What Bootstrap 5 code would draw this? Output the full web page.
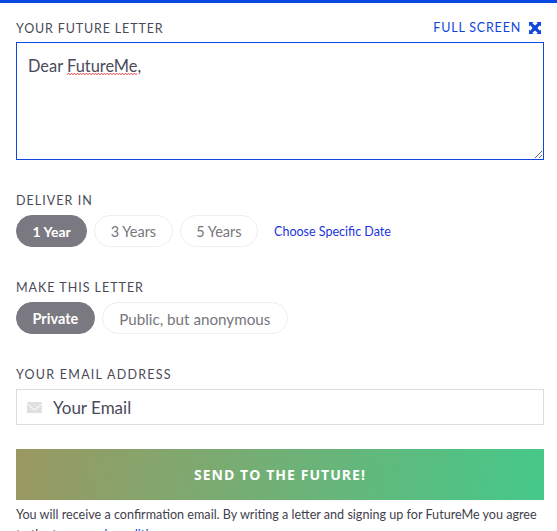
<!DOCTYPE html>
<html lang="en">
<head>
<meta charset="utf-8">
<title>FutureMe</title>
<link href="https://cdn.jsdelivr.net/npm/bootstrap@5.3.0/dist/css/bootstrap.min.css" rel="stylesheet">
<style>
html,body{height:531px;overflow:hidden}
body{font-family:Lato,"Open Sans",sans-serif;color:#4a4a5a;background:#fff;border-top:3px solid #0a47e0}
.fm-wrap{padding:0 13px 0 16px}
.fm-top{padding-top:17px}
.fm-label{font-size:12.5px;letter-spacing:.85px;line-height:16px;padding-top:1px;color:#4a4a58;text-transform:uppercase;margin:0}
.fm-ls-deliver{letter-spacing:1.05px}
.fm-ls-make{letter-spacing:.98px}
.fm-ls-email{letter-spacing:1.25px}
.fm-full{font-size:12.5px;letter-spacing:.8px;line-height:16px;color:#1146dc;text-transform:uppercase;text-decoration:none;margin-right:3px}
.fm-letter{height:118px;border:1px solid #1146dc;padding:11px 11px;font-size:16.4px;line-height:24px;color:#4a4a5a;resize:vertical;overflow:auto;margin-top:5px}
.fm-spell{background:url("data:image/svg+xml,%3Csvg xmlns='http://www.w3.org/2000/svg' width='3' height='2'%3E%3Cpath d='M0 1.500 1.500 .5 3 1.500' fill='none' stroke='%23e01010' stroke-width='.8'/%3E%3C/svg%3E") left bottom repeat-x}
.fm-pill{height:32px;border:1px solid #eee;border-radius:16px;background:#fff;color:#77767c;font-size:14.5px;line-height:30px;padding:1px 15.5px 0;font-weight:400}
.fm-pill.fm-on{background:#7a7981;border-color:#7a7981;color:#fff;font-weight:700}
.fm-pill.fm-tight{font-size:14px;padding:1px 15.5px 0}
.fm-big{font-size:15.2px;padding:1px 16.5px 0}
.fm-date{font-size:12.5px;color:#1a35e0;text-decoration:none;margin-left:9px;padding-top:2px}
.fm-email{height:36px;border:1px solid #ddd;margin-top:6px;padding-left:10px}
.fm-email svg{margin-top:1px}
.fm-email span{font-size:17px;color:#4a4a5a;margin-left:11px;padding-top:2px}
.fm-send{height:51px;margin-top:24px;background:linear-gradient(100deg,#9b9862,#45c98a);color:#fff;font-size:14px;font-weight:700;letter-spacing:1.05px;font-family:"Open Sans",sans-serif;border:0;border-radius:0}
.fm-note{font-size:12.6px;line-height:20px;color:#3f3f4c;margin:5px 0 0}
.fm-note a{color:#1146dc;text-decoration:none}
.fm-s1,.fm-s2,.fm-s3{margin-top:32px}
.fm-row{margin-top:6px;gap:7px}
</style>
</head>
<body>
<form class="fm-wrap">
  <div class="d-flex justify-content-between align-items-start fm-top">
    <p class="fm-label">Your Future Letter</p>
    <a class="fm-full d-flex align-items-center gap-2" href="#">Full Screen
      <svg width="12" height="12" viewBox="0 0 12 12" fill="#1146dc" aria-hidden="true"><path d="M0 0h4.500L3.300 1.200 6 3.600 8.700 1.200 7.500 0H12v4.500L10.800 3.300 8.400 6l2.400 2.700L12 7.500V12H7.500l1.200-1.200L6 8.400l-2.700 2.400L4.500 12H0V7.500l1.200 1.200L3.600 6 1.200 3.300 0 4.500z"/></svg>
    </a>
  </div>
  <div class="fm-letter">Dear <span class="fm-spell">FutureMe</span>,</div>

  <div class="fm-s1">
    <p class="fm-label fm-ls-deliver">Deliver In</p>
    <div class="d-flex align-items-center fm-row">
      <button type="button" class="fm-pill fm-on fm-tight">1 Year</button>
      <button type="button" class="fm-pill">3 Years</button>
      <button type="button" class="fm-pill">5 Years</button>
      <a class="fm-date" href="#">Choose Specific Date</a>
    </div>
  </div>

  <div class="fm-s2">
    <p class="fm-label fm-ls-make">Make This Letter</p>
    <div class="d-flex align-items-center fm-row">
      <button type="button" class="fm-pill fm-on">Private</button>
      <button type="button" class="fm-pill fm-big">Public, but anonymous</button>
    </div>
  </div>

  <div class="fm-s3">
    <p class="fm-label fm-ls-email">Your Email Address</p>
    <div class="fm-email d-flex align-items-center">
      <svg width="15" height="11" viewBox="0 0 15 11" fill="#e0e0e0" aria-hidden="true"><path d="M0 0h15v1.500L7.500 7.300 0 1.500zM0 2.500v8.500h15V2.500L7.500 8.300z"/></svg>
      <span>Your Email</span>
    </div>
  </div>

  <button type="button" class="fm-send btn w-100 text-uppercase d-block">Send to the Future!</button>
  <p class="fm-note">You will receive a confirmation email. By writing a letter and signing up for FutureMe you agree to the <a href="#">terms and conditions</a>.</p>
</form>
</body>
</html>
